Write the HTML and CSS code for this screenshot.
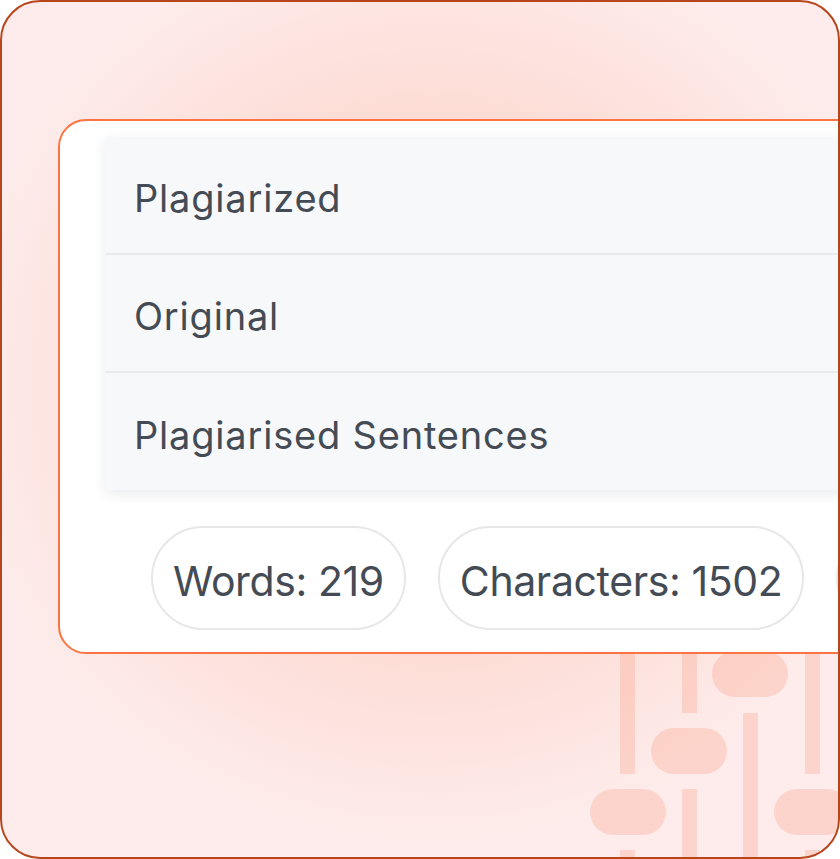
FILE: index.html
```html
<!DOCTYPE html>
<html lang="en">
<head>
<meta charset="utf-8">
<title>Plagiarism report</title>
<link rel="stylesheet" href="styles.css">
</head>
<body>
<div class="frame">
  <svg class="deco" width="840" height="859" viewBox="0 0 840 859" aria-hidden="true">
    <g fill="#f98a68" fill-opacity="0.24">
      <rect x="620" y="600" width="15" height="174"/>
      <rect x="590" y="789" width="76" height="46" rx="23"/>
      <rect x="620" y="850" width="15" height="20"/>
      <rect x="682" y="600" width="15" height="113"/>
      <rect x="651" y="728" width="76" height="46" rx="23"/>
      <rect x="682" y="789" width="15" height="80"/>
      <rect x="712" y="651" width="76" height="46" rx="23"/>
      <rect x="743" y="713" width="15" height="160"/>
      <rect x="805" y="600" width="15" height="174"/>
      <rect x="774" y="789" width="76" height="46" rx="23"/>
      <rect x="805" y="850" width="15" height="20"/>
    </g>
  </svg>
  <div class="card">
    <div class="table">
      <div class="row"><span class="label">Plagiarized</span><span class="value"></span></div>
      <div class="row"><span class="label">Original</span><span class="value"></span></div>
      <div class="row"><span class="label">Plagiarised Sentences</span><span class="value">5</span></div>
    </div>
    <div class="pills">
      <span class="pill">Words: 219</span>
      <span class="pill">Characters: 1502</span>
      <span class="pill">Sentences: 12</span>
    </div>
  </div>
</div>
</body>
</html>
```

FILE: styles.css
```css
* { box-sizing: border-box; }
html, body { margin: 0; padding: 0; }
body {
  width: 840px;
  height: 859px;
  overflow: hidden;
  background: #ffffff;
  font-family: "Inter", "Liberation Sans", sans-serif;
  color: #444b54;
}
.frame {
  position: relative;
  width: 840px;
  height: 859px;
  border: 2px solid #b8461d;
  border-radius: 40px;
  overflow: hidden;
  background:
    radial-gradient(ellipse 560px 540px at 430px 380px, #fdd0c4 0%, #fdd8cf 40%, rgba(253,232,230,0) 85%),
    #fdeceb;
  padding: 117px 0 0 56px;
}
.deco {
  position: absolute;
  left: -2px;
  top: -2px;
}
.card {
  position: relative;
  width: 1000px;
  height: 535px;
  background: #ffffff;
  border: 2px solid #fc7443;
  border-radius: 28px;
  padding: 16px 0 0 45px;
}
.table {
  background: #f7f8fa;
  border-radius: 4px 0 0 4px;
  box-shadow: 0 4px 14px rgba(30, 40, 60, 0.09);
}
.row {
  height: 118px;
  display: grid;
  grid-template-columns: 702px auto;
  align-items: center;
  padding-left: 29px;
  padding-top: 6px;
  border-bottom: 2px solid #e8eaed;
  font-size: 38px;
  letter-spacing: 0.8px;
}
.row:last-child { border-bottom: none; height: 117px; }
.pills {
  display: flex;
  gap: 32px;
  margin-top: 36px;
  padding-left: 46px;
}
.pill {
  flex: 0 0 auto;
  height: 104px;
  display: flex;
  align-items: center;
  padding: 5px 20px 0;
  border: 2px solid #e6e7e9;
  border-radius: 52px;
  font-size: 41px;
  letter-spacing: -0.4px;
}
```
